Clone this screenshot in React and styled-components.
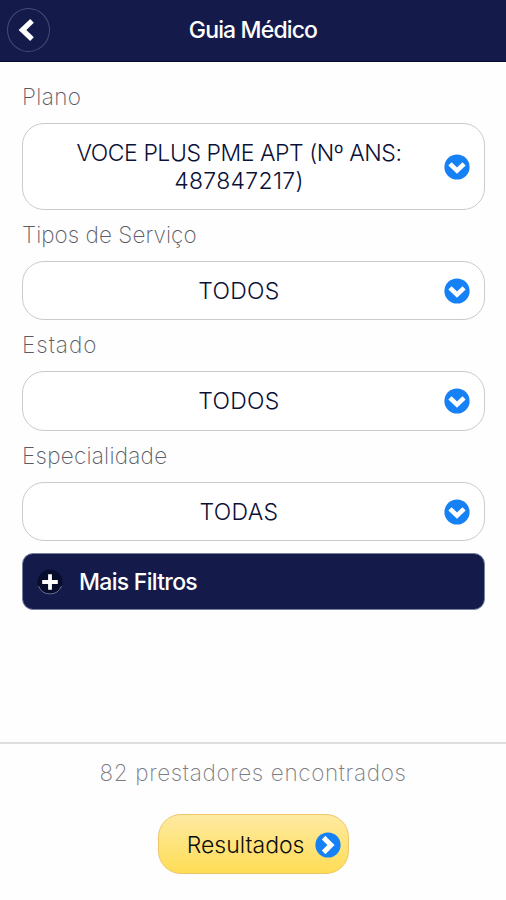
import React from 'react';
import styled, { createGlobalStyle } from 'styled-components';

const FIELDS = [
    { label: 'Plano', lines: ['VOCE PLUS PME APT (Nº ANS:', '487847217)'], height: 87, spacing: 0.4 },
    { label: 'Tipos de Serviço', lines: ['TODOS'], height: 59, spacing: 0.05 },
    { label: 'Estado', lines: ['TODOS'], height: 60, spacing: 1 },
    { label: 'Especialidade', lines: ['TODAS'], height: 59, spacing: 0.25 },
];

export default function App() {
    return (
        <>
            <GlobalStyle />
            <Page>
                <Header />
                <Filters />
                <Footer />
            </Page>
        </>
    );
}

function Header() {
    return (
        <HeaderStyle>
            <BackButton aria-label="Voltar">
                <svg width="42" height="44" viewBox="0 0 42 44" fill="none">
                    <path d="M24.6 12.6L14.8 22L24.6 31.4" stroke="#fff" strokeWidth="5.4" />
                </svg>
            </BackButton>
            <Title>Guia Médico</Title>
        </HeaderStyle>
    );
}

function Filters() {
    return (
        <FiltersStyle>
            {FIELDS.map((field) => (
                <React.Fragment key={field.label}>
                    <Label $spacing={field.spacing}>{field.label}</Label>
                    <Select $height={field.height}>
                        <Value>
                            {field.lines.map((line) => <Line key={line} $long={line.length > 20}>{line}</Line>)}
                        </Value>
                        <CircleArrow />
                    </Select>
                </React.Fragment>
            ))}
            <MoreFilters>
                <svg width="26" height="28" viewBox="0 0 26 28" fill="none">
                    <circle cx="13" cy="14" r="12.5" fill="#080d2c" />
                    <path d="M1.5 18A12.3 12.3 0 0 0 24.5 18" stroke="#6a7091" strokeWidth="1" />
                    <path d="M13 6.2V21.8M5.2 14H20.8" stroke="#fff" strokeWidth="3.8" />
                </svg>
                <span>Mais Filtros</span>
            </MoreFilters>
        </FiltersStyle>
    );
}

function Footer() {
    return (
        <FooterStyle>
            <Count>82 prestadores encontrados</Count>
            <ResultsButton>
                <span>Resultados</span>
                <CircleArrow right />
            </ResultsButton>
        </FooterStyle>
    );
}

function CircleArrow({ right }) {
    return (
        <Arrow width="26" height="26" viewBox="0 0 26 26" fill="none">
            <circle cx="13" cy="13" r="12.6" fill="#1581f5" />
            {right
                ? <path d="M10.4 7.4L16 13L10.4 18.6" stroke="#fff" strokeWidth="5" strokeLinecap="square" />
                : <path d="M7.6 11.4L13 16.6L18.4 11.4" stroke="#fff" strokeWidth="4.6" strokeLinecap="square" />}
        </Arrow>
    );
}

const GlobalStyle = createGlobalStyle`
    * {
        box-sizing: border-box;
    }

    body {
        margin: 0;
        background: #fefefe;
        font-family: Inter, "Open Sans", sans-serif;
    }

    button {
        font-family: inherit;
        border: none;
        padding: 0;
    }
`;

const Page = styled.div`
    display: flex;
    flex-direction: column;
    width: 100%;
    height: 900px;
    overflow: hidden;
`;

const HeaderStyle = styled.header`
    display: grid;
    grid-template-columns: 50px 1fr 50px;
    align-items: center;
    height: 62px;
    flex-shrink: 0;
    padding-bottom: 1px;
    background: #141b4b;
    border-bottom: 1px solid #05092f;
`;

const BackButton = styled.button`
    display: flex;
    width: 43px;
    height: 44px;
    margin-left: 7px;
    border: 1px solid #454b74;
    border-radius: 50%;
    background: transparent;
    align-items: center;
    justify-content: center;
`;

const Title = styled.h1`
    margin: 0;
    text-align: center;
    font-weight: 500;
    font-size: 23px;
    line-height: 30px;
    letter-spacing: -0.85px;
    color: #fff;
`;

const FiltersStyle = styled.main`
    display: flex;
    flex-direction: column;
    flex: 1;
    padding: 10px 21px 0 22px;
`;

const Label = styled.label`
    height: 51px;
    line-height: 50px;
    font-weight: 200;
    font-size: 22.5px;
    letter-spacing: ${(props) => props.$spacing}px;
    color: #5a5b66;
`;

const Select = styled.div`
    display: flex;
    align-items: center;
    height: ${(props) => props.$height}px;
    padding: 0 14px 0 11px;
    border: 1px solid #cbcbcb;
    border-radius: 22px;
    background: #fff;
`;

const Value = styled.div`
    display: flex;
    flex-direction: column;
    align-items: center;
    flex: 1;
    font-weight: 300;
    font-size: 23px;
    line-height: 28px;
    color: #0b1036;
`;

const Line = styled.span`
    letter-spacing: ${(props) => (props.$long ? '-0.45px' : '0.3px')};
`;

const Arrow = styled.svg`
    flex-shrink: 0;
`;

const MoreFilters = styled.button`
    display: flex;
    align-items: center;
    gap: 16px;
    height: 57px;
    margin: 12px 0 0;
    padding-left: 14px;
    border: 1px solid #77809f;
    border-radius: 11px;
    background: #141b4b;
    font-weight: 500;
    font-size: 23px;
    letter-spacing: -0.7px;
    color: #fff;
`;

const FooterStyle = styled.footer`
    display: flex;
    flex-direction: column;
    align-items: center;
    height: 158px;
    border-top: 2px solid #dedede;
`;

const Count = styled.p`
    margin: 13px 0 26px;
    font-weight: 200;
    font-size: 22.5px;
    line-height: 31px;
    letter-spacing: 0.65px;
    color: #7c7c82;
`;

const ResultsButton = styled.button`
    display: flex;
    align-items: center;
    justify-content: flex-end;
    gap: 10px;
    width: 191px;
    height: 60px;
    padding: 2px 7px 0 0;
    border: 1px solid #efc66a;
    border-radius: 23px;
    background: linear-gradient(#feeaa2, #fedd55);
    font-weight: 300;
    font-size: 23px;
    color: #0d0d0d;
`;
